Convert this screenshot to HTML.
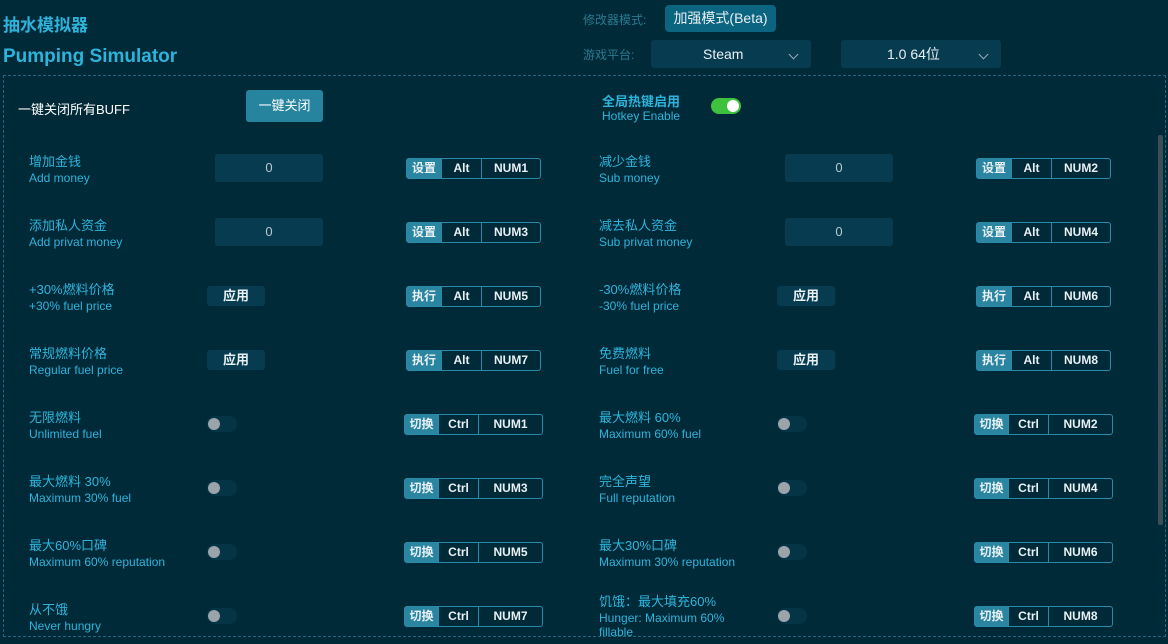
<!DOCTYPE html><html><head><meta charset="utf-8"><style>
*{margin:0;padding:0;box-sizing:border-box}
body{width:1168px;height:644px;background:#012a38;font-family:"Liberation Sans","Noto Sans CJK SC",sans-serif;position:relative;overflow:hidden;color:#2eb4dc}
.a{position:absolute}
.l1{font-size:13px;color:#2eb4dc;white-space:nowrap;margin-top:-2px}
.l2{font-size:12px;color:#2eb4dc;white-space:nowrap;margin-top:-1px}
.inp{position:absolute;width:108px;height:28px;background:#073c50;border-radius:3px;color:#b8c8d0;font-size:13px;text-align:center;line-height:28px}
.btn{position:absolute;width:58px;height:20px;background:#073c50;border-radius:3px;color:#e8f0f4;font-size:13px;font-weight:bold;text-align:center;line-height:20px}
.tg{position:absolute;width:30px;height:16px;background:#053545;border-radius:8px}
.tg::after{content:"";position:absolute;left:1px;top:2px;width:12px;height:12px;border-radius:6px;background:#9aa4aa}
.hk{position:absolute;height:21px;border:1px solid #2a8aaa;border-radius:3px;display:flex;font-size:12px;font-weight:bold;color:#e8f0f4;line-height:19px}
.hk span{text-align:center;border-left:1px solid #2a8aaa}
.hk span:first-child{background:#2a86a0;border-left:none}
.chev{position:absolute;left:139px;top:11px;width:7px;height:7px;border-right:1px solid #9ab;border-bottom:1px solid #9ab;transform:rotate(45deg)}
</style></head><body>
<div class="a" style="left:3px;top:11px;font-size:17px;font-weight:bold;color:#2eb4dc">抽水模拟器</div>
<div class="a" style="left:3px;top:46px;font-size:19px;font-weight:bold;color:#2eb4dc">Pumping Simulator</div>
<div class="a" style="left:583px;top:11px;font-size:12px;color:#2a7a90">修改器模式:</div>
<div class="a" style="left:665px;top:5px;width:111px;height:27px;background:#0b6480;border-radius:4px;color:#e8f0f4;font-size:14px;text-align:center;line-height:27px">加强模式(Beta)</div>
<div class="a" style="left:583px;top:46px;font-size:12px;color:#2a7a90">游戏平台:</div>
<div class="a" style="left:651px;top:40px;width:160px;height:28px;background:#073c50;border-radius:3px;color:#e8f0f4;font-size:14px;line-height:28px;padding-left:52px">Steam<span class="chev"></span></div>
<div class="a" style="left:841px;top:40px;width:160px;height:28px;background:#073c50;border-radius:3px;color:#e8f0f4;font-size:14px;line-height:28px;padding-left:46px">1.0 64位<span class="chev"></span></div>
<div class="a" style="left:3px;top:75px;width:1163px;height:562px;border:1px dashed #1e6a80"></div>
<div class="a" style="left:1158px;top:135px;width:5px;height:390px;background:#3a4e56;border-radius:2px"></div>
<div class="a" style="left:18px;top:99px;font-size:13px;color:#fff">一键关闭所有BUFF</div>
<div class="a" style="left:246px;top:90px;width:77px;height:32px;background:#27849e;border-radius:3px;color:#fff;font-size:13px;text-align:center;line-height:32px">一键关闭</div>
<div class="a" style="left:602px;top:91px;font-size:13px;font-weight:bold">全局热键启用</div>
<div class="a l2" style="left:602px;top:110px">Hotkey Enable</div>
<div class="a" style="left:711px;top:98px;width:30px;height:16px;background:#3ec23e;border-radius:8px"><div class="a" style="left:16px;top:2px;width:12px;height:12px;border-radius:6px;background:#fff"></div></div>

<div class="a l1" style="left:29px;top:153px">增加金钱</div><div class="a l2" style="left:29px;top:172px">Add money</div>
<div class="inp" style="left:215px;top:154px">0</div>
<div class="hk" style="left:406px;top:158px;width:135px"><span style="width:34px">设置</span><span style="width:40px">Alt</span><span style="flex:1">NUM1</span></div>
<div class="a l1" style="left:599px;top:153px">减少金钱</div><div class="a l2" style="left:599px;top:172px">Sub money</div>
<div class="inp" style="left:785px;top:154px">0</div>
<div class="hk" style="left:976px;top:158px;width:135px"><span style="width:34px">设置</span><span style="width:40px">Alt</span><span style="flex:1">NUM2</span></div>

<div class="a l1" style="left:29px;top:217px">添加私人资金</div><div class="a l2" style="left:29px;top:236px">Add privat money</div>
<div class="inp" style="left:215px;top:218px">0</div>
<div class="hk" style="left:406px;top:222px;width:135px"><span style="width:34px">设置</span><span style="width:40px">Alt</span><span style="flex:1">NUM3</span></div>
<div class="a l1" style="left:599px;top:217px">减去私人资金</div><div class="a l2" style="left:599px;top:236px">Sub privat money</div>
<div class="inp" style="left:785px;top:218px">0</div>
<div class="hk" style="left:976px;top:222px;width:135px"><span style="width:34px">设置</span><span style="width:40px">Alt</span><span style="flex:1">NUM4</span></div>

<div class="a l1" style="left:29px;top:281px">+30%燃料价格</div><div class="a l2" style="left:29px;top:300px">+30% fuel price</div>
<div class="btn" style="left:207px;top:286px">应用</div>
<div class="hk" style="left:406px;top:286px;width:135px"><span style="width:34px">执行</span><span style="width:40px">Alt</span><span style="flex:1">NUM5</span></div>
<div class="a l1" style="left:599px;top:281px">-30%燃料价格</div><div class="a l2" style="left:599px;top:300px">-30% fuel price</div>
<div class="btn" style="left:777px;top:286px">应用</div>
<div class="hk" style="left:976px;top:286px;width:135px"><span style="width:34px">执行</span><span style="width:40px">Alt</span><span style="flex:1">NUM6</span></div>

<div class="a l1" style="left:29px;top:345px">常规燃料价格</div><div class="a l2" style="left:29px;top:364px">Regular fuel price</div>
<div class="btn" style="left:207px;top:350px">应用</div>
<div class="hk" style="left:406px;top:350px;width:135px"><span style="width:34px">执行</span><span style="width:40px">Alt</span><span style="flex:1">NUM7</span></div>
<div class="a l1" style="left:599px;top:345px">免费燃料</div><div class="a l2" style="left:599px;top:364px">Fuel for free</div>
<div class="btn" style="left:777px;top:350px">应用</div>
<div class="hk" style="left:976px;top:350px;width:135px"><span style="width:34px">执行</span><span style="width:40px">Alt</span><span style="flex:1">NUM8</span></div>

<div class="a l1" style="left:29px;top:409px">无限燃料</div><div class="a l2" style="left:29px;top:428px">Unlimited fuel</div>
<div class="tg" style="left:207px;top:416px"></div>
<div class="hk" style="left:404px;top:414px;width:139px"><span style="width:33px">切换</span><span style="width:40px">Ctrl</span><span style="flex:1">NUM1</span></div>
<div class="a l1" style="left:599px;top:409px">最大燃料 60%</div><div class="a l2" style="left:599px;top:428px">Maximum 60% fuel</div>
<div class="tg" style="left:777px;top:416px"></div>
<div class="hk" style="left:974px;top:414px;width:139px"><span style="width:33px">切换</span><span style="width:40px">Ctrl</span><span style="flex:1">NUM2</span></div>

<div class="a l1" style="left:29px;top:473px">最大燃料 30%</div><div class="a l2" style="left:29px;top:492px">Maximum 30% fuel</div>
<div class="tg" style="left:207px;top:480px"></div>
<div class="hk" style="left:404px;top:478px;width:139px"><span style="width:33px">切换</span><span style="width:40px">Ctrl</span><span style="flex:1">NUM3</span></div>
<div class="a l1" style="left:599px;top:473px">完全声望</div><div class="a l2" style="left:599px;top:492px">Full reputation</div>
<div class="tg" style="left:777px;top:480px"></div>
<div class="hk" style="left:974px;top:478px;width:139px"><span style="width:33px">切换</span><span style="width:40px">Ctrl</span><span style="flex:1">NUM4</span></div>

<div class="a l1" style="left:29px;top:537px">最大60%口碑</div><div class="a l2" style="left:29px;top:556px">Maximum 60% reputation</div>
<div class="tg" style="left:207px;top:544px"></div>
<div class="hk" style="left:404px;top:542px;width:139px"><span style="width:33px">切换</span><span style="width:40px">Ctrl</span><span style="flex:1">NUM5</span></div>
<div class="a l1" style="left:599px;top:537px">最大30%口碑</div><div class="a l2" style="left:599px;top:556px">Maximum 30% reputation</div>
<div class="tg" style="left:777px;top:544px"></div>
<div class="hk" style="left:974px;top:542px;width:139px"><span style="width:33px">切换</span><span style="width:40px">Ctrl</span><span style="flex:1">NUM6</span></div>

<div class="a l1" style="left:29px;top:601px">从不饿</div><div class="a l2" style="left:29px;top:620px">Never hungry</div>
<div class="tg" style="left:207px;top:608px"></div>
<div class="hk" style="left:404px;top:606px;width:139px"><span style="width:33px">切换</span><span style="width:40px">Ctrl</span><span style="flex:1">NUM7</span></div>
<div class="a l1" style="left:599px;top:593px">饥饿：最大填充60%</div><div class="a l2" style="left:599px;top:612px;line-height:14px">Hunger: Maximum 60%<br>fillable</div>
<div class="tg" style="left:777px;top:608px"></div>
<div class="hk" style="left:974px;top:606px;width:139px"><span style="width:33px">切换</span><span style="width:40px">Ctrl</span><span style="flex:1">NUM8</span></div>
<div class="a" style="left:4px;top:637px;width:1162px;height:7px;background:#012a38"></div>
</body></html>
